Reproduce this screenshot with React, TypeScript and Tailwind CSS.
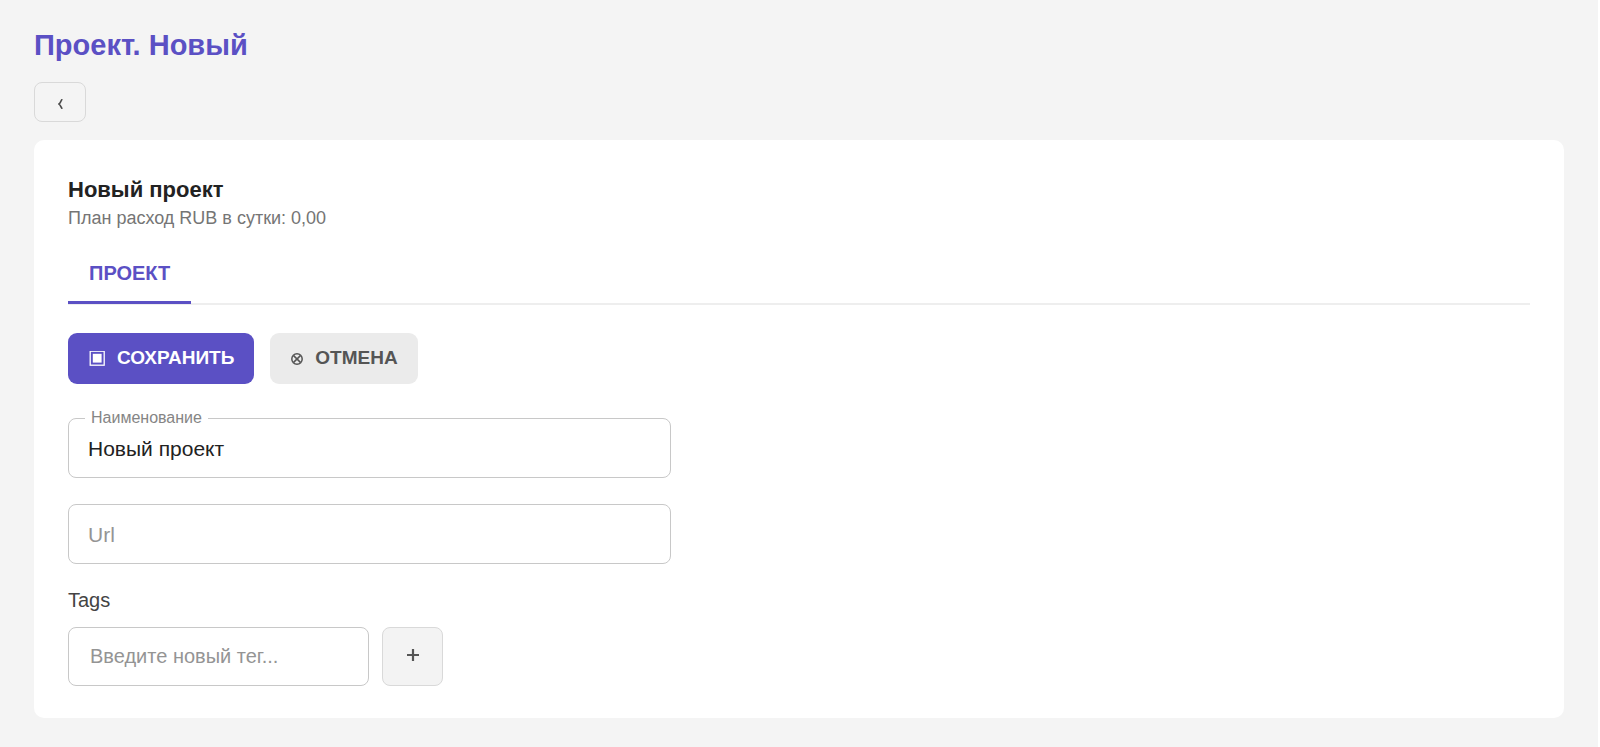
import { useState } from 'react';

function SaveIcon() {
  return (
    <svg className="w-4 h-4" viewBox="0 0 16 16" fill="none" aria-hidden="true">
      <rect x="1.2" y="0.2" width="14" height="14" stroke="currentColor" strokeWidth="1.3" />
      <rect x="3.8" y="2.8" width="8.8" height="8.8" fill="currentColor" />
    </svg>
  );
}

function CancelIcon() {
  return (
    <svg className="w-3 h-3" viewBox="0 0 12 12" fill="none" stroke="currentColor" strokeWidth="1.5" aria-hidden="true">
      <circle cx="6" cy="6" r="5.2" />
      <path d="M2.6 2.6l6.8 6.8M9.4 2.6L2.6 9.4" />
    </svg>
  );
}

export default function App() {
  const [name, setName] = useState('Новый проект');
  const [url, setUrl] = useState('');
  const [tag, setTag] = useState('');

  return (
    <div className="min-h-screen bg-[#f4f4f4] border-r-2 border-white px-[34px] pt-[26px] pb-7 font-['Liberation_Sans',Arial,sans-serif]">
      <h1 className="text-[29px] leading-[38px] font-bold text-[#5b50c4]">Проект. Новый</h1>
      <button
        type="button"
        aria-label="Назад"
        className="mt-[18px] flex h-10 w-[52px] items-center justify-center rounded-lg border border-[#d9d9d9] text-[#4a4a4a]"
      >
        <svg className="mt-1 w-[5px] h-[10px]" viewBox="0 0 5 10" fill="none" stroke="currentColor" strokeWidth="1.6" aria-hidden="true">
          <path d="M4.3 0.2Q3.6 0.8 2.6 2.8T1 5q0.6 0.2 1.6 2.2t1.7 2.6" />
        </svg>
      </button>

      <main className="mt-[18px] rounded-[10px] bg-white px-[34px] pt-9 pb-8">
        <h2 className="text-[22px] leading-7 font-bold text-[#222]">Новый проект</h2>
        <p className="text-[18px] leading-7 text-[#757575]">План расход RUB в сутки: 0,00</p>

        <div role="tablist" className="mt-4 flex border-b-2 border-[#eee]">
          <button
            type="button"
            role="tab"
            aria-selected="true"
            className="-mb-px h-[56px] border-b-3 border-[#5b50c4] px-[21px] pb-1 text-[20px] leading-6 font-bold text-[#5b50c4]"
          >
            ПРОЕКТ
          </button>
        </div>

        <form onSubmit={(e) => e.preventDefault()}>
          <div className="mt-7 flex gap-4">
            <button
              type="submit"
              className="flex h-[51px] items-center gap-3 rounded-[9px] bg-[#5b50c4] px-[21px] pr-5 text-[19px] font-bold text-white"
            >
              <SaveIcon />
              СОХРАНИТЬ
            </button>
            <button
              type="button"
              className="flex h-[51px] items-center gap-3 rounded-[9px] bg-[#ebebeb] px-[21px] pr-5 text-[19px] font-bold text-[#555]"
            >
              <CancelIcon />
              ОТМЕНА
            </button>
          </div>

          <div className="relative mt-[34px] max-w-[603px]">
            <label htmlFor="name" className="absolute left-[17px] -top-[10px] bg-white px-[6px] text-[16px] leading-5 text-[#858585]">
              Наименование
            </label>
            <input
              id="name"
              value={name}
              onChange={(e) => setName(e.target.value)}
              className="block h-[60px] w-full rounded-lg border border-[#c8c8c8] px-[19px] pt-[2px] text-[21px] text-[#222]"
            />
          </div>

          <input
            aria-label="Url"
            placeholder="Url"
            value={url}
            onChange={(e) => setUrl(e.target.value)}
            className="mt-[26px] block h-[60px] w-full max-w-[603px] rounded-lg border border-[#c8c8c8] px-[19px] pt-[2px] text-[21px] text-[#222] placeholder:text-[#949494]"
          />

          <label htmlFor="tag" className="mt-6 block w-fit text-[20px] leading-6 text-[#444]">
            Tags
          </label>
          <div className="mt-[15px] flex gap-[13px]">
            <input
              id="tag"
              placeholder="Введите новый тег..."
              value={tag}
              onChange={(e) => setTag(e.target.value)}
              className="h-[59px] w-[301px] rounded-lg border border-[#c8c8c8] px-[21px] text-[20px] text-[#222] placeholder:text-[#949494]"
            />
            <button
              type="button"
              aria-label="Добавить тег"
              className="flex h-[59px] w-[61px] items-center justify-center rounded-lg border border-[#d9d9d9] bg-[#f3f3f3] pb-1 text-[#555]"
            >
              <svg className="w-3 h-3" viewBox="0 0 12 12" stroke="currentColor" strokeWidth="2.2" aria-hidden="true">
                <path d="M6 0v12M0 6h12" />
              </svg>
            </button>
          </div>
        </form>
      </main>
    </div>
  );
}
